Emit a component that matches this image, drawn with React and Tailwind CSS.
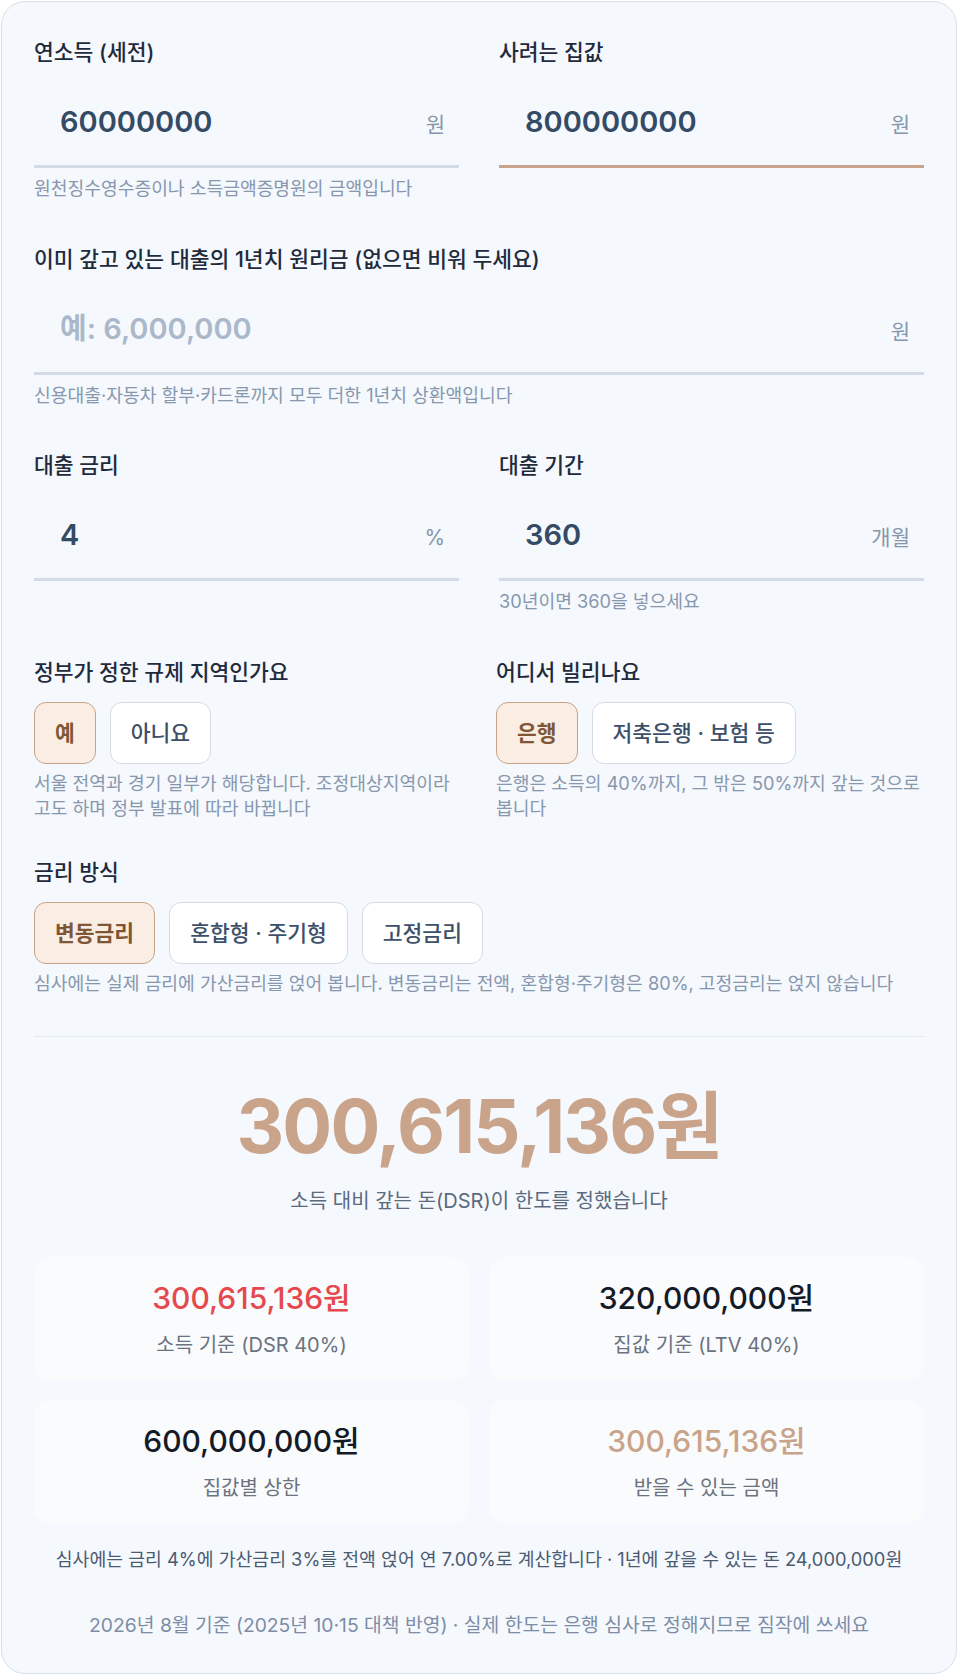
import React, { useState } from "react";
import clsx from "clsx";

const won = (n) => Math.ceil(n).toLocaleString("en-US") + "원";

function Field({ label, value, placeholder, unit, help, focused }) {
  const [v, setV] = useState(value || "");
  return (
    <div>
      <div className="text-[21.5px] font-medium leading-[26px] text-[#1f2b3c]">
        {label}
      </div>
      <div
        className={clsx(
          "mt-3.5 flex h-[89px] items-center border-b-[3px] pl-[26px] pr-3.5",
          focused ? "border-[#c9a48c]" : "border-[#d3dce6]"
        )}
      >
        <div className="flex w-full items-baseline">
          <input
            value={v}
            onChange={(e) => setV(e.target.value)}
            placeholder={placeholder}
            className="min-w-0 flex-1 bg-transparent text-[29px] font-semibold text-[#344b66] outline-none placeholder:text-[#aab8ca]"
          />
          <span className="text-[21px] text-[#8596ad]">{unit}</span>
        </div>
      </div>
      {help && (
        <p className="mt-2 text-[18.2px] leading-[25px] text-[#8797ae]">{help}</p>
      )}
    </div>
  );
}

function Choice({ label, options, value, onChange, help }) {
  return (
    <div>
      <div className="text-[21.5px] font-medium leading-[26px] text-[#1f2b3c]">
        {label}
      </div>
      <div className="mt-[17px] flex gap-3.5">
        {options.map((o) => (
          <button
            key={o}
            type="button"
            onClick={() => onChange(o)}
            className={clsx(
              "rounded-xl border px-5 py-4 text-[21.5px] leading-7",
              value === o
                ? "border-[#c8a286] bg-[#faeee4] font-semibold text-[#7f5636]"
                : "border-[#d4dce6] bg-white font-medium text-[#3d5069]"
            )}
          >
            {o}
          </button>
        ))}
      </div>
      <p className="mt-[7px] text-[18.2px] leading-[25px] text-[#8797ae]">{help}</p>
    </div>
  );
}

function Stat({ value, label, tone }) {
  return (
    <div className="rounded-2xl bg-[#f9fbfd] pt-[23px] pb-[22px] text-center">
      <div className={clsx("text-[30px] font-medium leading-9", tone)}>{value}</div>
      <div className="mt-4 text-[20px] leading-[26px] text-[#6b7280]">{label}</div>
    </div>
  );
}

export default function App() {
  const [regulated, setRegulated] = useState("예");
  const [lender, setLender] = useState("은행");
  const [rateType, setRateType] = useState("변동금리");

  // DSR: 연 소득 40%를 7% 스트레스 금리, 360개월 원리금균등으로 환산
  const yearly = 60000000 * 0.4;
  const r = 0.07 / 12;
  const dsr = ((yearly / 12) * (1 - Math.pow(1 + r, -360))) / r;
  const ltv = 800000000 * 0.4;
  const cap = 600000000;
  const limit = Math.min(dsr, ltv, cap);

  return (
    <div
      className="min-h-[1674px] bg-white"
      style={{ fontFamily: 'Inter, "Noto Sans CJK KR", sans-serif' }}
    >
      <div className="ml-px mt-px w-[956px] rounded-3xl border border-[#d7dfea] bg-[#f5f8fc] px-8 pt-[37px] pb-[35px]">
        <div className="grid grid-cols-2 gap-x-10">
          <Field
            label="연소득 (세전)"
            value="60000000"
            unit="원"
            help="원천징수영수증이나 소득금액증명원의 금액입니다"
          />
          <Field label="사려는 집값" value="800000000" unit="원" focused />
        </div>

        <div className="mt-[45px]">
          <Field
            label="이미 갚고 있는 대출의 1년치 원리금 (없으면 비워 두세요)"
            placeholder="예: 6,000,000"
            unit="원"
            help="신용대출·자동차 할부·카드론까지 모두 더한 1년치 상환액입니다"
          />
        </div>

        <div className="mt-11 grid grid-cols-2 gap-x-10">
          <Field label="대출 금리" value="4" unit="%" />
          <Field
            label="대출 기간"
            value="360"
            unit="개월"
            help="30년이면 360을 넣으세요"
          />
        </div>

        <div className="mt-[45px] grid grid-cols-2 gap-x-[34px]">
          <Choice
            label="정부가 정한 규제 지역인가요"
            options={["예", "아니요"]}
            value={regulated}
            onChange={setRegulated}
            help="서울 전역과 경기 일부가 해당합니다. 조정대상지역이라고도 하며 정부 발표에 따라 바뀝니다"
          />
          <Choice
            label="어디서 빌리나요"
            options={["은행", "저축은행 · 보험 등"]}
            value={lender}
            onChange={setLender}
            help="은행은 소득의 40%까지, 그 밖은 50%까지 갚는 것으로 봅니다"
          />
        </div>

        <div className="mt-[38px]">
          <Choice
            label="금리 방식"
            options={["변동금리", "혼합형 · 주기형", "고정금리"]}
            value={rateType}
            onChange={setRateType}
            help="심사에는 실제 금리에 가산금리를 얹어 봅니다. 변동금리는 전액, 혼합형·주기형은 80%, 고정금리는 얹지 않습니다"
          />
        </div>

        <div className="mt-10 h-px bg-[#e3e9f0]" />

        <div className="mt-[52px] text-center text-[74px] font-bold leading-none tracking-[-0.025em] text-[#c9a48a]">
          {won(limit)}
        </div>
        <p className="mt-[25px] text-center text-[20px] leading-[26px] text-[#5b6a7e]">
          소득 대비 갚는 돈(DSR)이 한도를 정했습니다
        </p>

        <div className="mt-[43px] grid grid-cols-2 gap-5">
          <Stat value={won(dsr)} label="소득 기준 (DSR 40%)" tone="text-[#e5484d]" />
          <Stat value={won(ltv)} label="집값 기준 (LTV 40%)" tone="text-[#141a26]" />
          <Stat value={won(cap)} label="집값별 상한" tone="text-[#141a26]" />
          <Stat value={won(limit)} label="받을 수 있는 금액" tone="text-[#c9a48a]" />
        </div>

        <p className="mt-[23px] text-center text-[18.3px] leading-[26px] text-[#4b5b72]">
          심사에는 금리 4%에 가산금리 3%를 전액 얹어 연 7.00%로 계산합니다 · 1년에 갚을 수 있는 돈 24,000,000원
        </p>
        <p className="mt-10 text-center text-[19.3px] leading-[26px] text-[#7d8da6]">
          2026년 8월 기준 (2025년 10·15 대책 반영) · 실제 한도는 은행 심사로 정해지므로 짐작에 쓰세요
        </p>
      </div>
    </div>
  );
}
